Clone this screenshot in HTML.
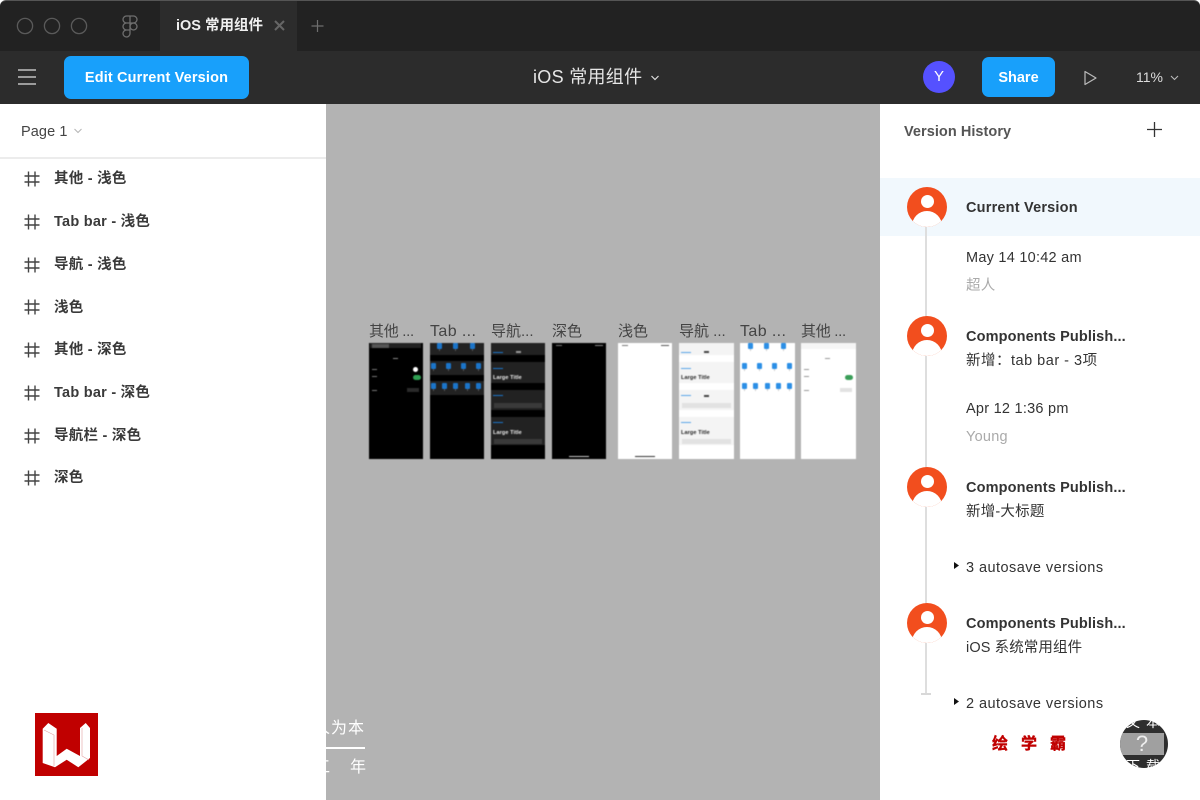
<!DOCTYPE html>
<html lang="zh"><head><meta charset="utf-8"><title>iOS 常用组件</title>
<style>
*{box-sizing:border-box;margin:0;padding:0}
html,body{width:1200px;height:800px;overflow:hidden;background:#fff}
body{position:relative;font-family:"Liberation Sans","Noto Sans CJK SC",sans-serif;color:#333}
.a,.t{position:absolute}
.t{white-space:nowrap;line-height:20px}
.b{font-weight:700}
.btn{position:absolute;background:#18a0fb;border-radius:7px;color:#fff;font-weight:700;font-size:14.500px;padding-top:1px;display:flex;align-items:center;justify-content:center}
.lay{left:54px;font-size:14.500px;font-weight:700;color:#3a3a3a;letter-spacing:.25px}
.hash{position:absolute;left:24px;width:16px;height:16px}
.lab{top:322px;font-size:15px;color:#444;line-height:20px}
.fr{position:absolute;top:343px;height:116px;overflow:hidden;filter:blur(.6px)}
.d{background:#000}.l{background:#fff}
.fr div{position:absolute}
.fr .ic{width:5px;height:6px;border-radius:1px;background:#1b74c9;box-shadow:0 4px 0 -2px #555}
.l .ic{background:#2b8fe6;box-shadow:0 4px 0 -2px #ccc}
.fr .lt{font-size:5.500px;line-height:6px;font-weight:700;white-space:nowrap;letter-spacing:.1px}
.d .lt{color:#eee}.l .lt{color:#222}
.av{position:absolute;left:907px;width:40px;height:40px;border-radius:50%;background:#f24e1e;overflow:hidden}
.av i{position:absolute;display:block;background:#fff;border-radius:50%}
.av .h{left:13.500px;top:8px;width:13px;height:13px}
.av .s{left:5px;top:24px;width:30px;height:30px}
.rt{left:966px;font-size:14.500px;color:#333;letter-spacing:.25px}
.rt.b{letter-spacing:.13px}
.rt.au{letter-spacing:.45px}
</style></head><body>

<div class="a" style="left:0;top:0;width:1200px;height:51px;background:#222;border-top:1px solid #555;border-radius:6px 6px 0 0"></div>
<div class="a" style="left:160px;top:1px;width:137px;height:50px;background:#2c2c2c"></div>
<div class="a" style="left:0;top:51px;width:1200px;height:53px;background:#2c2c2c"></div>

<svg class="a" style="left:0;top:0" width="340" height="104" fill="none">
<g stroke="#5a5a5a" stroke-width="1.300"><circle cx="25" cy="26" r="7.600"/><circle cx="52" cy="26" r="7.600"/><circle cx="79" cy="26" r="7.600"/></g>
<g stroke="#6e6e6e" stroke-width="1.300"><path d="M130 16h-3.500a3.500 3.500 0 0 0 0 7h3.500zM130 16h3.500a3.500 3.500 0 0 1 0 7h-3.500zM130 23h-3.500a3.500 3.500 0 0 0 0 7h3.500zM130 30h-3.500a3.500 3.500 0 1 0 3.500 3.500z"/><circle cx="133.500" cy="26.500" r="3.500"/></g>
<path d="M275 21l9 9M284 21l-9 9" stroke="#666" stroke-width="2"/>
<path d="M317.500 20v12M311.500 26h12" stroke="#6e6e6e" stroke-width="1.200"/>
<path d="M18 70h18M18 77h18M18 84h18" stroke="#ddd" stroke-width="1.200"/>
</svg>
<div class="t b" style="left:176px;top:16px;font-size:14.500px;color:#f0f0f0">iOS 常用组件</div>

<div class="btn" style="left:64px;top:56px;width:185px;height:43px;letter-spacing:.15px">Edit Current Version</div>
<div class="t" style="left:533px;top:67px;font-size:18px;color:#e6e6e6;letter-spacing:.3px">iOS 常用组件</div>
<svg class="a" style="left:640px;top:60px" width="560" height="40" fill="none">
<path d="M11.500 16l3.500 3.500 3.500-3.500" stroke="#ddd" stroke-width="1.200"/>
<path d="M445 11.500v13l11-6.500z" stroke="#bbb" stroke-width="1.200" stroke-linejoin="round"/>
<path d="M531 16l3.500 3.500 3.500-3.500" stroke="#bbb" stroke-width="1.100"/>
</svg>
<div class="a" style="left:923px;top:61px;width:32px;height:32px;border-radius:50%;background:#5551ff;color:#fff;font-size:15px;line-height:32px;text-align:center">Y</div>
<div class="btn" style="left:982px;top:57px;width:73px;height:40px">Share</div>
<div class="t" style="left:1136px;top:67px;font-size:14px;color:#ddd">11%</div>

<div class="a" style="left:326px;top:104px;width:554px;height:696px;background:#b3b3b3"></div>
<div class="a" style="left:0;top:157px;width:326px;height:2px;background:#ececec"></div>

<div class="t" style="left:21px;top:122px;font-size:14.500px;color:#444;letter-spacing:.1px">Page 1</div>
<svg class="a" style="left:72px;top:126px" width="14" height="10" fill="none"><path d="M2.500 3l3.500 3.500 3.500-3.500" stroke="#b5b5b5" stroke-width="1"/></svg>

<svg width="0" height="0" style="position:absolute"><defs><g id="h" stroke="#444" stroke-width="1.400" fill="none"><path d="M4.500 .5v15M11 .5v15M.5 5h15M.5 11h15"/></g></defs></svg>
<svg class="hash" style="top:171px"><use href="#h"/></svg><div class="t lay" style="top:169px">其他 - 浅色</div>
<svg class="hash" style="top:214px"><use href="#h"/></svg><div class="t lay" style="top:212px">Tab bar - 浅色</div>
<svg class="hash" style="top:257px"><use href="#h"/></svg><div class="t lay" style="top:255px">导航 - 浅色</div>
<svg class="hash" style="top:299px"><use href="#h"/></svg><div class="t lay" style="top:298px">浅色</div>
<svg class="hash" style="top:342px"><use href="#h"/></svg><div class="t lay" style="top:340px">其他 - 深色</div>
<svg class="hash" style="top:385px"><use href="#h"/></svg><div class="t lay" style="top:383px">Tab bar - 深色</div>
<svg class="hash" style="top:428px"><use href="#h"/></svg><div class="t lay" style="top:426px">导航栏 - 深色</div>
<svg class="hash" style="top:470px"><use href="#h"/></svg><div class="t lay" style="top:468px">深色</div>

<div class="t lab" style="left:369px;letter-spacing:-.3px">其他 ...</div>
<div class="t lab" style="left:430px;font-size:16px;letter-spacing:.4px">Tab ...</div>
<div class="t lab" style="left:491px">导航...</div>
<div class="t lab" style="left:552px">深色</div>
<div class="t lab" style="left:618px">浅色</div>
<div class="t lab" style="left:679px">导航 ...</div>
<div class="t lab" style="left:740px;font-size:16px;letter-spacing:.4px">Tab ...</div>
<div class="t lab" style="left:801px;letter-spacing:-.3px">其他 ...</div>

<!-- dark: other -->
<div class="fr d" style="left:369px;width:54px">
<div style="left:1px;top:0;width:51px;height:5px;background:#222"></div>
<div style="left:3px;top:1px;width:17px;height:4px;background:#555"></div>
<div style="left:24px;top:15px;width:5px;height:1px;background:#888"></div>
<div style="left:3px;top:26px;width:5px;height:1px;background:#777"></div>
<div style="left:3px;top:33px;width:5px;height:1px;background:#777"></div>
<div style="left:3px;top:47px;width:5px;height:1px;background:#777"></div>
<div style="left:44px;top:24px;width:5px;height:5px;border-radius:50%;background:#fff"></div>
<div style="left:44px;top:32px;width:8px;height:5px;border-radius:3px;background:#2f9f52"></div>
<div style="left:38px;top:45px;width:12px;height:4px;background:#2a2a2a"></div>
</div>
<!-- dark: tab -->
<div class="fr d" style="left:430px;width:54px">
<div style="left:0;top:0;width:54px;height:12px;background:#222"></div>
<div style="left:0;top:18px;width:54px;height:14px;background:#222"></div>
<div style="left:0;top:38px;width:54px;height:14px;background:#222"></div>
<div class="ic" style="left:7px;top:0"></div><div class="ic" style="left:23px;top:0"></div><div class="ic" style="left:40px;top:0"></div>
<div class="ic" style="left:1px;top:20px"></div><div class="ic" style="left:16px;top:20px"></div><div class="ic" style="left:31px;top:20px"></div><div class="ic" style="left:46px;top:20px"></div>
<div class="ic" style="left:1px;top:40px"></div><div class="ic" style="left:12px;top:40px"></div><div class="ic" style="left:23px;top:40px"></div><div class="ic" style="left:35px;top:40px"></div><div class="ic" style="left:46px;top:40px"></div>
</div>
<!-- dark: nav -->
<div class="fr d" style="left:491px;width:54px">
<div style="left:0;top:0;width:54px;height:12px;background:#222"></div>
<div style="left:0;top:19px;width:54px;height:21px;background:#222"></div>
<div style="left:0;top:47px;width:54px;height:20px;background:#222"></div>
<div style="left:0;top:74px;width:54px;height:28px;background:#222"></div>
<div style="left:3px;top:60px;width:48px;height:5px;background:#3a3a3a"></div>
<div style="left:3px;top:96px;width:48px;height:5px;background:#3a3a3a"></div>
<div class="lt" style="left:2px;top:32px">Large Title</div>
<div class="lt" style="left:2px;top:87px">Large Title</div>
<div style="left:2px;top:9px;width:10px;height:1px;background:#1b74c9"></div>
<div style="left:25px;top:8px;width:5px;height:2px;background:#999"></div>
<div style="left:2px;top:25px;width:10px;height:1px;background:#1b74c9"></div>
<div style="left:2px;top:52px;width:10px;height:1px;background:#1b74c9"></div>
<div style="left:2px;top:79px;width:10px;height:1px;background:#1b74c9"></div>
</div>
<!-- dark: blank -->
<div class="fr d" style="left:552px;width:54px">
<div style="left:17px;top:113px;width:20px;height:1px;background:#ccc"></div>
<div style="left:4px;top:2px;width:6px;height:1px;background:#777"></div>
<div style="left:43px;top:2px;width:8px;height:1px;background:#888"></div>
</div>
<!-- light: blank -->
<div class="fr l" style="left:618px;width:54px">
<div style="left:17px;top:113px;width:20px;height:1px;background:#333"></div>
<div style="left:4px;top:2px;width:6px;height:1px;background:#777"></div>
<div style="left:43px;top:2px;width:8px;height:1px;background:#555"></div>
</div>
<!-- light: nav -->
<div class="fr l" style="left:679px;width:55px">
<div style="left:0;top:0;width:55px;height:12px;background:#f4f4f4"></div>
<div style="left:0;top:19px;width:55px;height:21px;background:#f4f4f4"></div>
<div style="left:0;top:47px;width:55px;height:20px;background:#f4f4f4"></div>
<div style="left:0;top:74px;width:55px;height:28px;background:#f4f4f4"></div>
<div style="left:3px;top:60px;width:49px;height:5px;background:#e2e2e2"></div>
<div style="left:3px;top:96px;width:49px;height:5px;background:#e2e2e2"></div>
<div class="lt" style="left:2px;top:32px">Large Title</div>
<div class="lt" style="left:2px;top:87px">Large Title</div>
<div style="left:2px;top:9px;width:10px;height:1px;background:#5aa5e8"></div>
<div style="left:25px;top:8px;width:5px;height:2px;background:#444"></div>
<div style="left:2px;top:25px;width:10px;height:1px;background:#5aa5e8"></div>
<div style="left:2px;top:52px;width:10px;height:1px;background:#5aa5e8"></div>
<div style="left:25px;top:52px;width:5px;height:2px;background:#444"></div>
<div style="left:2px;top:79px;width:10px;height:1px;background:#5aa5e8"></div>
</div>
<!-- light: tab -->
<div class="fr l" style="left:740px;width:55px">
<div class="ic" style="left:8px;top:0"></div><div class="ic" style="left:24px;top:0"></div><div class="ic" style="left:41px;top:0"></div>
<div class="ic" style="left:2px;top:20px"></div><div class="ic" style="left:17px;top:20px"></div><div class="ic" style="left:32px;top:20px"></div><div class="ic" style="left:47px;top:20px"></div>
<div class="ic" style="left:2px;top:40px"></div><div class="ic" style="left:13px;top:40px"></div><div class="ic" style="left:25px;top:40px"></div><div class="ic" style="left:36px;top:40px"></div><div class="ic" style="left:47px;top:40px"></div>
</div>
<!-- light: other -->
<div class="fr l" style="left:801px;width:55px">
<div style="left:0;top:0;width:55px;height:6px;background:#f5f5f5"></div>
<div style="left:24px;top:15px;width:5px;height:1px;background:#999"></div>
<div style="left:3px;top:26px;width:5px;height:1px;background:#999"></div>
<div style="left:3px;top:33px;width:5px;height:1px;background:#999"></div>
<div style="left:3px;top:47px;width:5px;height:1px;background:#999"></div>
<div style="left:44px;top:32px;width:8px;height:5px;border-radius:3px;background:#3a9e58"></div>
<div style="left:39px;top:45px;width:12px;height:4px;background:#e2e2e2"></div>
</div>

<!-- watermark -->
<div class="a" style="left:35px;top:713px;width:63px;height:63px;background:#c00000"></div>
<svg class="a" style="left:35px;top:713px" width="63" height="63" fill="none">
<path d="M7.700 15.700L13.300 10 21.700 15.700V43L31.700 35.700 45 43V15L50.700 10 55 15V45L43.300 54.300 31.700 46.700 20 54.300 7.700 50z" fill="#fff"/>
<path d="M9 17L19 22V53M47 15V43L54 47" stroke="#e2a0a0" stroke-width=".6"/>
</svg>
<div class="a" style="left:326px;top:717px;width:50px;height:24px;overflow:hidden"><div class="t" style="left:-12px;top:2px;font-size:16px;color:#fff;letter-spacing:1px">人为本</div></div>
<div class="a" style="left:326px;top:747px;width:39px;height:2px;background:#fff"></div>
<div class="a" style="left:326px;top:756px;width:50px;height:24px;overflow:hidden"><div class="t" style="left:-12px;top:2px;font-size:16px;color:#fff">工</div><div class="t" style="left:24px;top:2px;font-size:16px;color:#fff">年</div></div>
<div class="t b" style="left:992px;top:735px;font-size:16px;color:#c00000;letter-spacing:13px;-webkit-text-stroke:.4px #c00000">绘学霸</div>
<div class="a" style="left:1120px;top:720px;width:48px;height:48px;border-radius:50%;background:#2e2e2e;overflow:hidden;color:#fff">
<div class="t" style="left:6px;top:-8px;font-size:14px;letter-spacing:6px">文本</div>
<div class="t" style="left:6px;top:36px;font-size:14px;letter-spacing:6px">下载</div>
<div class="a" style="left:0;top:13px;width:44px;height:22px;background:#a0a0a0;color:#eee;text-align:center;font-size:22px;line-height:22px">?</div>
</div>

<!-- version history -->
<div class="t b" style="left:904px;top:122px;font-size:14.500px;color:#555;letter-spacing:.05px">Version History</div>
<svg class="a" style="left:1146px;top:121px" width="18" height="18"><path d="M8.500 1v15M1 8.500h15" stroke="#333" stroke-width="1.300"/></svg>
<div class="a" style="left:880px;top:178px;width:320px;height:58px;background:#f1f8fd"></div>
<div class="a" style="left:925px;top:226px;width:2px;height:468px;background:#dedede"></div>
<div class="a" style="left:921px;top:693px;width:10px;height:2px;background:#d8d8d8"></div>

<div class="av" style="top:187px"><i class="h"></i><i class="s"></i></div>
<div class="av" style="top:316px"><i class="h"></i><i class="s"></i></div>
<div class="av" style="top:467px"><i class="h"></i><i class="s"></i></div>
<div class="av" style="top:603px"><i class="h"></i><i class="s"></i></div>

<div class="t b rt" style="top:198px;letter-spacing:.2px">Current Version</div>
<div class="t rt" style="top:248px">May 14 10:42 am</div>
<div class="t rt" style="top:276px;color:#aaa">超人</div>
<div class="t b rt" style="top:327px">Components Publish...</div>
<div class="t rt" style="top:351px;letter-spacing:.5px">新增：tab bar - 3项</div>
<div class="t rt" style="top:399px">Apr 12 1:36 pm</div>
<div class="t rt" style="top:427px;color:#aaa">Young</div>
<div class="t b rt" style="top:478px">Components Publish...</div>
<div class="t rt" style="top:502px;letter-spacing:.2px">新增-大标题</div>
<div class="t rt au" style="top:558px">3 autosave versions</div>
<div class="t b rt" style="top:614px">Components Publish...</div>
<div class="t rt" style="top:638px;letter-spacing:.1px">iOS 系统常用组件</div>
<div class="t rt au" style="top:694px">2 autosave versions</div>
<svg class="a" style="left:953px;top:561px" width="8" height="10"><path d="M1 1v7l5-3.500z" fill="#111"/></svg>
<svg class="a" style="left:953px;top:697px" width="8" height="10"><path d="M1 1v7l5-3.500z" fill="#111"/></svg>
</body></html>
